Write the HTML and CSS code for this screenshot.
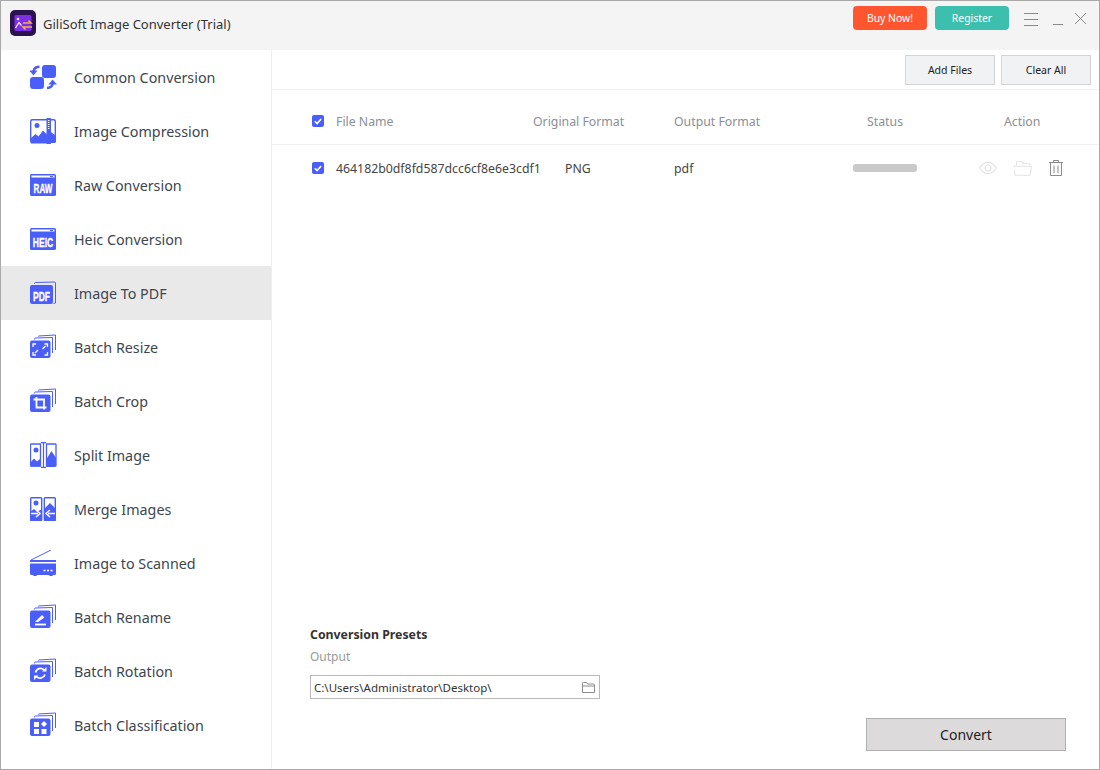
FILE: index.html
```html
<!DOCTYPE html>
<html lang="en">
<head>
    <meta charset="UTF-8">
    <title>GiliSoft Image Converter (Trial)</title>
    <link rel="stylesheet" href="styles.css">
</head>
<body>
    <svg class="defs" aria-hidden="true" xmlns="http://www.w3.org/2000/svg">
        <symbol id="stack" viewBox="0 0 28 26">
            <path fill="none" stroke="#4a5ffa" stroke-width="1" d="M4.500 5.500v-.5a1 1 0 0 1 1-1l17-.5v15.500"/>
            <path fill="none" stroke="#4a5ffa" stroke-width="1" d="M8.500 2.500v-.5l17-1v15"/>
            <rect x="0" y="6.500" width="20.500" height="17.500" rx="2" fill="#4a5ffa"/>
        </symbol>
    </svg>

    <div class="window">
        <header class="titlebar">
            <div class="logo">
                <svg viewBox="0 0 26 26" xmlns="http://www.w3.org/2000/svg" aria-hidden="true">
                    <rect width="26" height="26" rx="5" fill="#2b1250"/>
                    <rect x="4.500" y="5" width="17" height="16" rx="1.500" fill="#7c2fe6"/>
                    <circle cx="8" cy="9" r="1.300" fill="#f4e9ff"/>
                    <path d="M5.500 18l3.500-5.500 2.500 3" fill="none" stroke="#f4e9ff" stroke-width="1.300"/>
                    <path d="M13 13h8l-2.500-2.500M22 17h-9l2.500 2.500" fill="none" stroke="#f5b342" stroke-width="1.500"/>
                </svg>
            </div>
            <div class="app-name">GiliSoft Image Converter (Trial)</div>
            <button class="btn-buy">Buy Now!</button>
            <button class="btn-register">Register</button>
            <svg class="win-icons" viewBox="0 0 74 16" xmlns="http://www.w3.org/2000/svg" aria-hidden="true">
                <path fill="none" stroke="#8a8a8a" stroke-width="1" d="M0 2.500h14M0 8.500h14M0 14.500h14M29 13.500h10M51 2l11 11M62 2l-11 11"/>
            </svg>
        </header>

        <div class="body-wrap">
            <ul class="sidebar">
                <li>
                    <svg class="nav-icon" viewBox="0 0 28 26" xmlns="http://www.w3.org/2000/svg" aria-hidden="true">
                        <rect x="12" y="1" width="14" height="13" rx="3" fill="#4a5ffa"/>
                        <rect x="0" y="13" width="14" height="12" rx="3" fill="#4a5ffa"/>
                        <path d="M9.500 2.800c-3.500 0-5.500 1.700-6 4.500" fill="none" stroke="#4a5ffa" stroke-width="2.400"/>
                        <path d="M-.5 6.500l4 5 4-5z" fill="#4a5ffa"/>
                        <path d="M17 24c3.500-.2 5.300-1.800 5.800-4.500" fill="none" stroke="#4a5ffa" stroke-width="2.400"/>
                        <path d="M18.500 20.500l4-5 4.500 5z" fill="#4a5ffa"/>
                    </svg>
                    <span>Common Conversion</span>
                </li>
                <li>
                    <svg class="nav-icon" viewBox="0 0 28 26" xmlns="http://www.w3.org/2000/svg" aria-hidden="true">
                        <rect x=".7" y="1.700" width="24.600" height="22.600" rx="1.500" fill="#fff" stroke="#4a5ffa" stroke-width="1.400"/>
                        <path d="M0 21l5.500-5 3 2.500 4.500-6 4 4v9h-15.500a1 1 0 0 1-1-1zM21 14l5 4v5a2 2 0 0 1-2 2h-3z" fill="#4a5ffa"/>
                        <circle cx="7" cy="7.500" r="2.500" fill="#4a5ffa"/>
                        <rect x="16.500" y="0" width="4.500" height="26" rx=".5" fill="#4a5ffa"/>
                        <path d="M18.700 2v10" stroke="#fff" stroke-width="1.500" stroke-dasharray="1 1"/>
                    </svg>
                    <span>Image Compression</span>
                </li>
                <li>
                    <svg class="nav-icon" viewBox="0 0 28 26" xmlns="http://www.w3.org/2000/svg" aria-hidden="true">
                        <rect x="0" y="2" width="26" height="22" rx="1.500" fill="#4a5ffa"/>
                        <rect x="1.500" y="3.500" width="23" height="2" fill="#fff"/>
                        <rect x="20" y="4" width="3" height="1" fill="#4a5ffa"/>
                        <text class="icon-label" transform="translate(13 20.500) scale(.95 1.600)">RAW</text>
                    </svg>
                    <span>Raw Conversion</span>
                </li>
                <li>
                    <svg class="nav-icon" viewBox="0 0 28 26" xmlns="http://www.w3.org/2000/svg" aria-hidden="true">
                        <rect x="0" y="2" width="26" height="22" rx="1.500" fill="#4a5ffa"/>
                        <rect x="1.500" y="3.500" width="23" height="2" fill="#fff"/>
                        <rect x="20" y="4" width="3" height="1" fill="#4a5ffa"/>
                        <text class="icon-label" transform="translate(13 20.500) scale(1 1.600)">HEiC</text>
                    </svg>
                    <span>Heic Conversion</span>
                </li>
                <li class="active">
                    <svg class="nav-icon" viewBox="0 0 28 26" xmlns="http://www.w3.org/2000/svg" aria-hidden="true">
                        <path d="M4.500 4v-.5a1 1 0 0 1 1-1l19-.5a1 1 0 0 1 1 1v20l-2 .5" fill="none" stroke="#4a5ffa"/>
                        <rect x="0" y="5" width="23" height="19" rx="2" fill="#4a5ffa"/>
                        <text class="icon-label" transform="translate(11.500 20.500) scale(1 1.600)">PDF</text>
                    </svg>
                    <span>Image To PDF</span>
                </li>
                <li>
                    <svg class="nav-icon" viewBox="0 0 28 26" xmlns="http://www.w3.org/2000/svg" aria-hidden="true">
                        <use href="#stack"/>
                        <path d="M3 13v-3h3M17.500 13v-3h-3M3 18v3h3M17.500 18v3h-3M5 19l3-3M15.500 12l-3 3" fill="none" stroke="#fff" stroke-width="1.300"/>
                    </svg>
                    <span>Batch Resize</span>
                </li>
                <li>
                    <svg class="nav-icon" viewBox="0 0 28 26" xmlns="http://www.w3.org/2000/svg" aria-hidden="true">
                        <use href="#stack"/>
                        <path d="M6.500 9v10.500h10M3.500 11.500h10.500v10" fill="none" stroke="#fff" stroke-width="1.800"/>
                    </svg>
                    <span>Batch Crop</span>
                </li>
                <li>
                    <svg class="nav-icon" viewBox="0 0 28 26" xmlns="http://www.w3.org/2000/svg" aria-hidden="true">
                        <path d="M1 2h9.500v22h-9.500a.5.500 0 0 1-.5-.5v-21a.5.500 0 0 1 .5-.5zm15.500 0h9a.5.500 0 0 1 .5.500v21a.5.500 0 0 1-.5.500h-9z" fill="#fff" stroke="#4a5ffa" stroke-width="1.300"/>
                        <path d="M0 21l4-4.500 3 3 3.500-3v8h-9.500a.5.500 0 0 1-.5-.5zM16.500 25v-8l5-8 4.500 7v7a2 2 0 0 1-2 2z" fill="#4a5ffa"/>
                        <circle cx="6" cy="8" r="2.500" fill="#4a5ffa"/>
                        <path d="M13.500 1v24M11 .7h5M11 25.300h5" stroke="#4a5ffa" stroke-width="1.200" fill="none"/>
                    </svg>
                    <span>Split Image</span>
                </li>
                <li>
                    <svg class="nav-icon" viewBox="0 0 28 26" xmlns="http://www.w3.org/2000/svg" aria-hidden="true">
                        <rect x=".7" y="1.700" width="11" height="22.600" rx=".8" fill="#fff" stroke="#4a5ffa" stroke-width="1.400"/>
                        <rect x="14.300" y="1.700" width="11" height="22.600" rx=".8" fill="#fff" stroke="#4a5ffa" stroke-width="1.400"/>
                        <path d="M0 16l4-3 3 2.500 5-2v11.500h-11a1 1 0 0 1-1-1zM14 13l6-6 6 6v11a1 1 0 0 1-1 1h-11z" fill="#4a5ffa"/>
                        <circle cx="6" cy="7" r="2.500" fill="#4a5ffa"/>
                        <path d="M1 17.500h7M6 14l4 3.500-4 3.500M25 17.500h-7M20 14l-4 3.500 4 3.500" fill="none" stroke="#fff" stroke-width="1.500"/>
                    </svg>
                    <span>Merge Images</span>
                </li>
                <li>
                    <svg class="nav-icon" viewBox="0 0 28 26" xmlns="http://www.w3.org/2000/svg" aria-hidden="true">
                        <path d="M1 10l20-10" fill="none" stroke="#4a5ffa"/>
                        <rect x="0" y="10" width="26" height="2" fill="#4a5ffa"/>
                        <path d="M0 13.500h26v10a1.500 1.500 0 0 1-1.500 1.500h-23a1.500 1.500 0 0 1-1.500-1.500z" fill="#4a5ffa"/>
                        <rect x="3" y="24" width="4" height="2" rx="1" fill="#4a5ffa"/>
                        <rect x="19" y="24" width="4" height="2" rx="1" fill="#4a5ffa"/>
                        <path d="M13.500 20.500h9" stroke="#fff" stroke-width="1.600" stroke-dasharray="2 1.500"/>
                    </svg>
                    <span>Image to Scanned</span>
                </li>
                <li>
                    <svg class="nav-icon" viewBox="0 0 28 26" xmlns="http://www.w3.org/2000/svg" aria-hidden="true">
                        <use href="#stack"/>
                        <path d="M5 20.500h11" stroke="#fff" stroke-width="1.800"/>
                        <path d="M5 18l7-7 2.500 2.500-6.500 4.500z" fill="#fff"/>
                    </svg>
                    <span>Batch Rename</span>
                </li>
                <li>
                    <svg class="nav-icon" viewBox="0 0 28 26" xmlns="http://www.w3.org/2000/svg" aria-hidden="true">
                        <use href="#stack"/>
                        <path d="M5.500 14.500a5 5 0 0 1 8.500-2.500M15 16.500a5 5 0 0 1-8.500 2" fill="none" stroke="#fff" stroke-width="1.800"/>
                        <path d="M12 13.500h4.500v-4.500zM8.500 17.500h-4.500v4.500z" fill="#fff"/>
                    </svg>
                    <span>Batch Rotation</span>
                </li>
                <li>
                    <svg class="nav-icon" viewBox="0 0 28 26" xmlns="http://www.w3.org/2000/svg" aria-hidden="true">
                        <use href="#stack"/>
                        <rect x="4" y="10" width="5" height="5" fill="#fff"/>
                        <path d="M14 9l3 3-3 3-3-3z" fill="#fff"/>
                        <rect x="4" y="17" width="5" height="5" fill="#fff"/>
                        <rect x="11.500" y="17" width="5" height="5" fill="#fff"/>
                    </svg>
                    <span>Batch Classification</span>
                </li>
            </ul>

            <main class="main">
                <div class="toolbar">
                    <button class="btn-tool">Add Files</button>
                    <button class="btn-tool">Clear All</button>
                </div>

                <div class="table">
                    <div class="tr th">
                        <span class="check"><svg viewBox="0 0 12 12" xmlns="http://www.w3.org/2000/svg" aria-hidden="true"><path d="M2.800 6.200l2.300 2.300 4-4.500" fill="none" stroke="#fff" stroke-width="1.600"/></svg></span>
                        <span>File Name</span>
                        <span>Original Format</span>
                        <span>Output Format</span>
                        <span class="status-head">Status</span>
                        <span class="action-head">Action</span>
                    </div>
                    <div class="tr td">
                        <span class="check"><svg viewBox="0 0 12 12" xmlns="http://www.w3.org/2000/svg" aria-hidden="true"><path d="M2.800 6.200l2.300 2.300 4-4.500" fill="none" stroke="#fff" stroke-width="1.600"/></svg></span>
                        <span>464182b0df8fd587dcc6cf8e6e3cdf1</span>
                        <span class="format">PNG</span>
                        <span>pdf</span>
                        <span><span class="progress"></span></span>
                        <span class="actions">
                            <svg width="18" height="14" viewBox="0 0 18 14" xmlns="http://www.w3.org/2000/svg" aria-hidden="true">
                                <path d="M.7 7c2.300-3.800 5-5.700 8.300-5.700s6 1.900 8.300 5.700c-2.300 3.800-5 5.700-8.300 5.700s-6-1.900-8.300-5.700z" fill="none" stroke="#e2e2e2" stroke-width="1.200"/>
                                <circle cx="9" cy="7" r="3" fill="none" stroke="#e2e2e2" stroke-width="1.200"/>
                            </svg>
                            <svg width="18" height="15" viewBox="0 0 18 15" xmlns="http://www.w3.org/2000/svg" aria-hidden="true">
                                <path d="M2.500 4.500v-3a1 1 0 0 1 1-1h4l1.500 2h5.500a1 1 0 0 1 1 1v1M.6 5.500h15.800a1 1 0 0 1 1 1l-1.200 7a1 1 0 0 1-1 1h-13.400a1 1 0 0 1-1-1l-1.200-7z" fill="none" stroke="#e2e2e2" stroke-width="1.100" transform="translate(0 -.2)"/>
                            </svg>
                            <svg width="14" height="16" viewBox="0 0 14 16" xmlns="http://www.w3.org/2000/svg" aria-hidden="true">
                                <path d="M0 2.500h14M4.500 2.500v-2h5v2M1.500 2.500v13h11v-13M5 5.500v7.500M9 5.500v7.500" fill="none" stroke="#8c8c8c" stroke-width="1"/>
                            </svg>
                        </span>
                    </div>
                </div>

                <section class="presets">
                    <h4>Conversion Presets</h4>
                    <div class="output-label">Output</div>
                    <div class="path-box">
                        <span>C:\Users\Administrator\Desktop\</span>
                        <svg width="13" height="11" viewBox="0 0 13 11" xmlns="http://www.w3.org/2000/svg" aria-hidden="true">
                            <path d="M.5 10.500v-9a1 1 0 0 1 1-1h3l1 1.500h6a1 1 0 0 1 1 1v7.500zM.5 4h12" fill="none" stroke="#8c8c8c"/>
                        </svg>
                    </div>
                </section>

                <div class="convert-row">
                    <button class="btn-convert">Convert</button>
                </div>
            </main>
        </div>
    </div>
</body>
</html>
```

FILE: styles.css
```css
body{
    margin: 0;
    font-family: "Noto Sans", sans-serif;
    background: #fff;
}
.defs{
    display: none;
}
.window{
    width: 1100px;
    height: 770px;
    box-sizing: border-box;
    border: 1px solid #a9a9a9;
    display: flex;
    flex-direction: column;
    overflow: hidden;
}

.titlebar{
    height: 49px;
    flex-shrink: 0;
    background-color: #f4f4f4;
    display: flex;
    align-items: flex-start;
    padding-left: 9px;
    box-sizing: border-box;
}
.logo{
    width: 26px;
    height: 26px;
    margin-top: 9px;
}
.logo svg{
    width: 26px;
    height: 26px;
    display: block;
}
.app-name{
    margin-left: 7px;
    margin-top: 13px;
    font-size: 13px;
    line-height: 20px;
    color: #333;
}
.titlebar button{
    border: none;
    width: 74px;
    height: 24px;
    margin-top: 5px;
    border-radius: 4px;
    color: #fff;
    font-family: inherit;
    font-size: 10.4px;
    padding: 0;
}
.btn-buy{
    margin-left: auto;
    background-color: #ff5630;
}
.btn-register{
    margin-left: 8px;
    background-color: #3cbfad;
}
.win-icons{
    width: 74px;
    height: 16px;
    margin: 10px 1px 0 15px;
    flex-shrink: 0;
}

.body-wrap{
    flex: 1;
    display: flex;
    min-height: 0;
}
.sidebar{
    width: 270px;
    flex-shrink: 0;
    margin: 0;
    padding: 0;
    list-style: none;
    border-right: 1px solid #efefef;
}
.sidebar li{
    height: 54px;
    display: flex;
    align-items: center;
    gap: 16px;
    padding-left: 29px;
    font-size: 14.3px;
    color: #3d4650;
}
.sidebar li.active{
    background-color: #e9e9e9;
}
.nav-icon{
    width: 28px;
    height: 26px;
    flex-shrink: 0;
}
.icon-label{
    font-family: "Liberation Sans", sans-serif;
    font-size: 8.500px;
    font-weight: 700;
    fill: #fff;
    stroke: #fff;
    stroke-width: .25px;
    text-anchor: middle;
}

.main{
    flex: 1;
    min-width: 0;
    display: flex;
    flex-direction: column;
}
.toolbar{
    height: 40px;
    flex-shrink: 0;
    box-sizing: border-box;
    border-bottom: 1px solid #f0f0f0;
    display: flex;
    justify-content: flex-end;
    gap: 6px;
    padding: 5px 8px 0 0;
}
.btn-tool{
    width: 90px;
    height: 30px;
    background-color: #f1f2f4;
    border: 1px solid #d4d4d4;
    font-family: inherit;
    font-size: 10.500px;
    color: #222;
    padding: 0;
}

.table{
    flex: 1;
    padding-left: 40px;
}
.tr{
    display: grid;
    grid-template-columns: 24px 197px 141px 179px 126px 1fr;
    align-items: center;
}
.th{
    height: 55px;
    box-sizing: border-box;
    margin-left: -40px;
    padding: 8px 0 0 40px;
    border-bottom: 1px solid #f0f0f0;
    font-size: 12.300px;
    color: #8a8f98;
}
.td{
    height: 46px;
    font-size: 12.300px;
    color: #444;
}
.check{
    width: 12px;
    height: 12px;
    border-radius: 2px;
    background-color: #4a5ffa;
    display: block;
}
.check svg{
    display: block;
    width: 12px;
    height: 12px;
}
.status-head{
    padding-left: 14px;
}
.action-head{
    padding-left: 25px;
}
.format{
    padding-left: 32px;
}
.progress{
    display: block;
    width: 64px;
    height: 8px;
    border-radius: 3px;
    background-color: #c9c9c9;
}
.actions{
    display: flex;
    align-items: center;
    gap: 17px;
}

.presets{
    padding-left: 38px;
}
.presets h4{
    margin: 0;
    font-size: 12.300px;
    line-height: 18px;
    font-weight: 700;
    color: #333;
}
.output-label{
    margin-top: 4px;
    font-size: 12px;
    line-height: 18px;
    color: #999;
}
.path-box{
    margin-top: 9px;
    width: 290px;
    height: 24px;
    box-sizing: border-box;
    border: 1px solid #b9b9b9;
    display: flex;
    align-items: center;
    justify-content: space-between;
    padding: 0 4px 0 3px;
    font-size: 11.500px;
    color: #333;
}
.convert-row{
    display: flex;
    justify-content: flex-end;
    padding: 19px 33px 18px 0;
}
.btn-convert{
    width: 200px;
    height: 33px;
    background-color: #dcdadb;
    border: 1px solid #b0b0b0;
    font-family: inherit;
    font-size: 14px;
    color: #222;
    padding: 0;
}
```
